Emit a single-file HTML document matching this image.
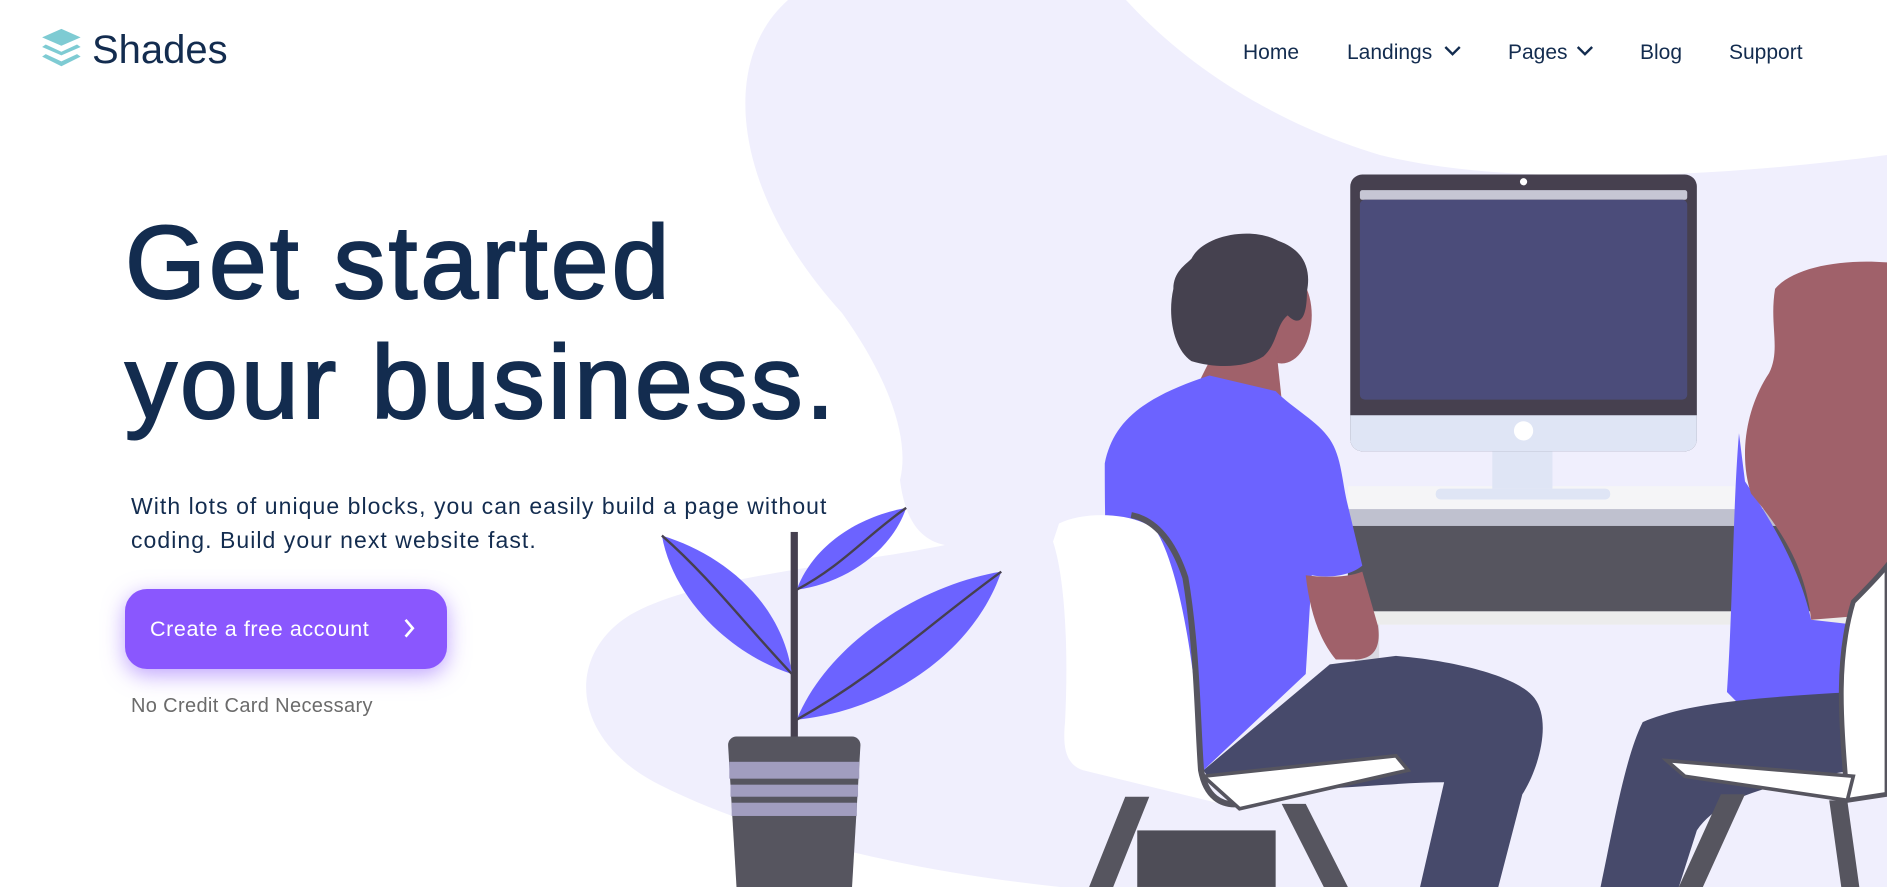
<!DOCTYPE html>
<html><head><meta charset="utf-8"><style>
*{margin:0;padding:0;box-sizing:border-box}
body{width:1887px;height:887px;overflow:hidden;background:#fff;font-family:"Liberation Sans",sans-serif;position:relative;color:#132c4f}
svg{position:absolute;left:0;top:0}
.t{position:absolute;white-space:nowrap}
.nav{top:41px;font-size:21px;color:#132c4f}
h1{position:absolute;left:125px;top:203px;font-size:104px;font-weight:normal;line-height:120px;letter-spacing:3px;color:#132c4f;-webkit-text-stroke:2px #132c4f}
.btn{position:absolute;left:125px;top:589px;width:322px;height:80px;border-radius:22px;background:#8a57fe;box-shadow:0 6px 22px rgba(138,87,254,.55);color:#fff;font-size:21.5px;line-height:80px;padding-left:25px;letter-spacing:0.6px}
</style></head><body>
<svg width="1887" height="887" viewBox="0 0 1887 887">
<path d="M788 0 C720 60 730 190 842 313 C890 380 910 440 900 480 C905 520 920 540 945 545 C850 565 700 575 630 615 C565 655 570 740 660 785 C760 835 900 870 1060 887 L1887 887 L1887 155 C1700 180 1500 185 1380 155 C1280 125 1190 70 1126 0 Z" fill="#f0effd"/>
</svg>
<svg width="1887" height="887" viewBox="0 0 1568 737">
<g fill="#7ecbd3">
<path d="M51 24 L67 31 L51 38 L35 31Z"/>
<path d="M38 37 L51 43 L64 37 L67 39 L51 46 L35 39Z"/>
<path d="M38 45 L51 51 L64 45 L67 47 L51 55 L35 47Z"/>
</g>
<path d="M1201 39 l6 6 l6 -6" stroke="#132c4f" stroke-width="2" fill="none"/>
<path d="M1311 39 l6 6 l6 -6" stroke="#132c4f" stroke-width="2" fill="none"/>
<rect x="1120" y="404" width="448" height="19" fill="#f5f5f7"/>
<rect x="1120" y="423" width="448" height="14" fill="#bfc1cf"/>
<rect x="1120" y="437" width="448" height="71" fill="#56555f"/>
<rect x="1120" y="508" width="448" height="11" fill="#ececec"/>
<rect x="1126" y="519" width="20" height="130" fill="#d9d9e2"/>
<rect x="1240" y="372" width="50" height="34" fill="#dfe5f5"/>
<rect x="1193" y="406" width="145" height="9" rx="4" fill="#dfe5f5"/>
<rect x="1122" y="145" width="288" height="230" rx="10" fill="#46404f"/>
<path d="M1122 345 H1410 V365 a10 10 0 0 1 -10 10 H1132 a10 10 0 0 1 -10 -10Z" fill="#dfe5f5"/>
<rect x="1130" y="158" width="272" height="8" rx="2" fill="#c6c6d4"/>
<rect x="1130" y="166" width="272" height="166" rx="4" fill="#4b4c7a"/>
<circle cx="1266" cy="151" r="3" fill="#fff"/>
<circle cx="1266" cy="358" r="8" fill="#fff"/>
<rect x="657" y="442" width="6" height="172" fill="#46404f"/>
<path d="M550 445 C600 460 650 500 658 560 C610 545 560 500 550 445Z" fill="#6c63ff"/>
<path d="M550 445 C590 480 620 520 658 560" stroke="#46404f" stroke-width="2" fill="none"/>
<path d="M753 422 C740 460 700 485 662 490 C675 455 710 430 753 422Z" fill="#6c63ff"/>
<path d="M753 422 C720 445 700 470 662 490" stroke="#46404f" stroke-width="2" fill="none"/>
<path d="M832 475 C810 540 740 590 662 598 C690 530 770 485 832 475Z" fill="#6c63ff"/>
<path d="M832 475 C770 520 730 560 662 598" stroke="#46404f" stroke-width="2" fill="none"/>
<path d="M612 612 H708 a7 7 0 0 1 7 7 L708 737 H612 L605 619 a7 7 0 0 1 7 -7Z" fill="#56555f"/>
<rect x="606" y="633" width="108" height="14" fill="#a19dbf"/>
<rect x="607" y="652" width="106" height="10" fill="#a19dbf"/>
<rect x="608" y="667" width="104" height="11" fill="#a19dbf"/>
<ellipse cx="1065" cy="262" rx="25" ry="40" fill="#a0616a"/>
<path d="M1005 300 L1060 285 L1065 332 L995 320Z" fill="#a0616a"/>
<path d="M990 215 C1000 195 1040 188 1062 200 C1082 207 1090 222 1086 242 C1086 265 1080 272 1070 262 C1060 270 1062 285 1050 296 C1035 306 1010 306 990 300 C975 290 970 262 975 240 C975 226 985 220 990 215Z" fill="#45414f"/>
<path d="M918 385 C925 350 950 330 1005 312 L1060 325 C1075 340 1095 350 1105 365 C1115 380 1115 400 1120 420 L1132 470 C1120 480 1100 480 1090 478 L1085 560 L1000 640 L930 640 C920 560 918 450 918 385Z" fill="#6c63ff"/>
<path d="M1085 478 C1100 480 1120 480 1132 475 L1145 520 C1148 540 1140 548 1125 548 L1110 548 C1095 530 1088 505 1085 478Z" fill="#a0616a"/>
<path d="M1000 640 L1105 552 L1160 545 C1200 548 1260 560 1275 580 C1290 600 1278 640 1265 660 L1245 737 L1180 737 L1200 650 C1150 650 1090 660 1010 655Z" fill="#474a6b"/>
<path d="M935 662 H955 L925 737 H905Z M1065 668 H1085 L1120 737 H1100Z" fill="#56555f"/>
<rect x="945" y="690" width="115" height="47" fill="#4e4d57"/>
<path d="M880 435 C900 425 940 425 960 440 C980 470 995 560 998 640 C1000 655 1005 665 1015 668 L900 640 C885 635 883 620 885 600 C888 540 885 480 875 450Z" fill="#fff"/>
<path d="M940 428 C960 432 975 450 985 480 C995 540 995 600 998 640 C1002 662 1015 670 1030 668" stroke="#56555f" stroke-width="5" fill="none"/>
<path d="M1000 645 L1160 628 L1170 640 L1030 672Z" fill="#fff" stroke="#56555f" stroke-width="3"/>
<path d="M1445 360 C1440 420 1440 500 1435 575 L1450 590 L1545 575 L1550 520 L1505 515 C1495 470 1470 430 1450 400Z" fill="#6c63ff"/>
<path d="M1475 240 C1490 222 1530 215 1568 218 L1568 510 L1505 515 C1500 470 1480 440 1455 410 C1445 380 1450 340 1470 310 C1480 290 1470 270 1475 240Z" fill="#a0616a"/>
<path d="M1365 600 C1400 585 1450 580 1540 575 L1540 640 C1480 650 1430 660 1410 690 L1395 737 L1330 737 C1340 690 1350 630 1365 600Z" fill="#474a6b"/>
<path d="M1430 660 H1450 L1415 737 H1395Z M1520 665 H1535 L1545 737 H1530Z" fill="#56555f"/>
<path d="M1540 500 C1560 480 1568 470 1568 470 L1568 660 L1535 665 C1530 600 1525 550 1540 500Z" fill="#fff" stroke="#56555f" stroke-width="4"/>
<path d="M1385 632 L1540 645 L1535 665 L1400 645Z" fill="#fff" stroke="#56555f" stroke-width="3"/>
</svg>
<div class="t" style="left:92px;top:28px;font-size:40px;color:#132c4f">Shades</div>
<div class="t nav" style="left:1243px">Home</div>
<div class="t nav" style="left:1347px">Landings</div>
<div class="t nav" style="left:1508px">Pages</div>
<div class="t nav" style="left:1640px">Blog</div>
<div class="t nav" style="left:1729px">Support</div>
<h1>Get started<br>your business.</h1>
<div class="t" style="left:131px;top:489px;font-size:23px;line-height:34px;letter-spacing:1.05px;color:#132c4f">With lots of unique blocks, you can easily build a page without<br>coding. Build your next website fast.</div>
<div class="btn">Create a free account</div>
<svg width="1887" height="887" viewBox="0 0 1568 737" style="pointer-events:none"><path d="M337 515 l6 7 l-6 7" stroke="#fff" stroke-width="2.2" fill="none"/></svg>
<div class="t" style="left:131px;top:695px;font-size:20px;letter-spacing:0.35px;color:#6b6b6b">No Credit Card Necessary</div>
</body></html>
